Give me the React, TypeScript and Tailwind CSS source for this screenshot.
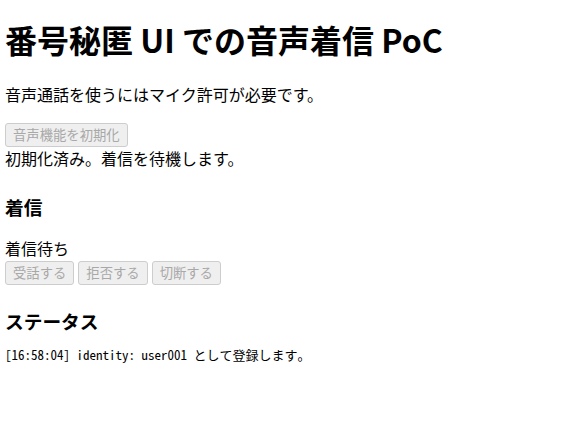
export default function App() {
  const btn =
    'h-[24px] px-[7px] text-[13.33px] leading-[20px] border border-[#cdcdcd] rounded-[3px] bg-[#efefef] text-[#a8a8a8]'

  return (
    <div className="pl-[5px] pb-4 text-black bg-white font-['Noto_Sans_CJK_JP','Noto_Sans',sans-serif]">
      <h1 className="pt-[16px] text-[32px] leading-[1.448] font-bold">番号秘匿 UI での音声着信 PoC</h1>

      <p className="mt-[21px] text-[16px] leading-[1.448]">音声通話を使うにはマイク許可が必要です。</p>

      <div className="mt-[17px] flex">
        <button disabled className={btn}>音声機能を初期化</button>
      </div>
      <div className="text-[16px] leading-[1.448]">初期化済み。着信を待機します。</div>

      {/* 着信 */}
      <h2 className="mt-[22px] text-[18.72px] leading-[1.448] font-bold">着信</h2>
      <div className="mt-[17px] text-[16px] leading-[1.448]">着信待ち</div>
      <div className="mt-[1px] flex gap-[4px]">
        <button disabled className={btn}>受話する</button>
        <button disabled className={btn}>拒否する</button>
        <button disabled className={btn}>切断する</button>
      </div>

      {/* ステータス */}
      <h2 className="mt-[22px] text-[18.72px] leading-[1.448] font-bold">ステータス</h2>
      <div className="mt-[12px] text-[13px] leading-[1.448] font-['Noto_Sans_Mono_CJK_JP',monospace]">
        [16:58:04] identity: user001 として登録します。
      </div>
    </div>
  )
}
